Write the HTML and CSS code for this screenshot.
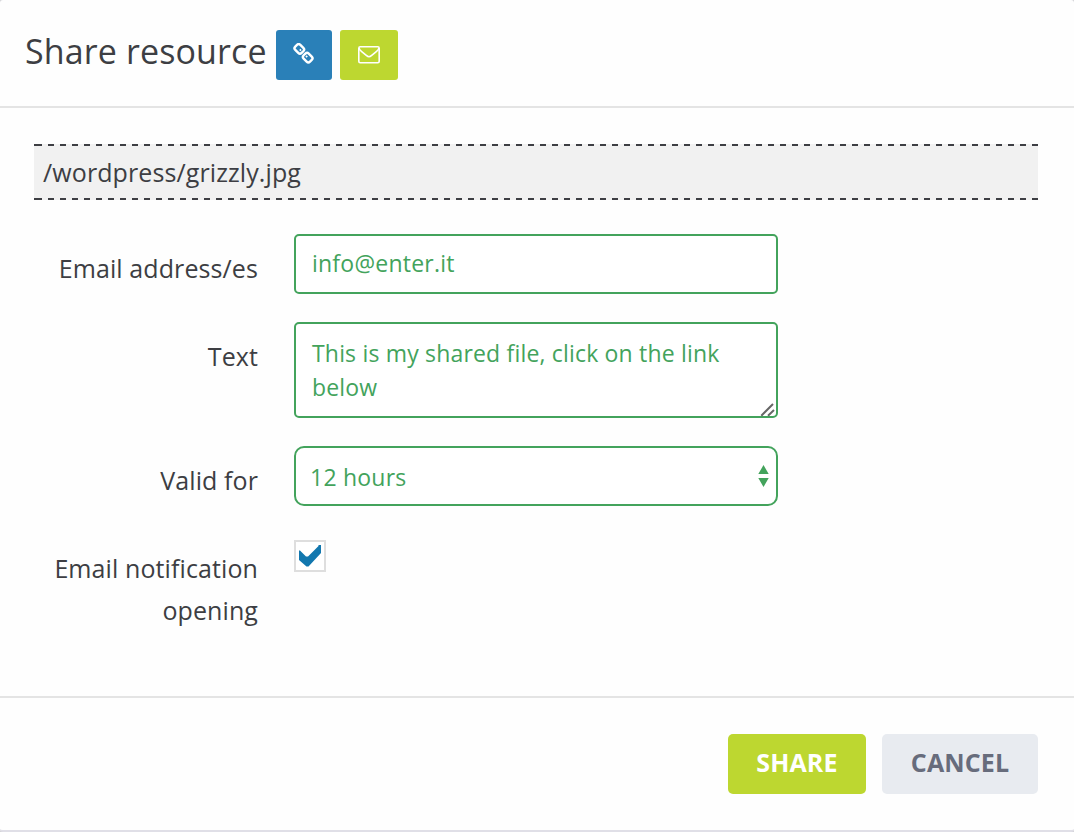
FILE: index.html
```html
<!DOCTYPE html>
<html lang="en">
<head>
<meta charset="utf-8">
<title>Share resource</title>
<link rel="stylesheet" href="styles.css">
</head>
<body>
<div class="modal">
  <header class="modal-header">
    <h1 class="title">Share resource</h1>
    <button class="tool tool-link" type="button" aria-label="Link">
      <svg width="21" height="21" viewBox="0 0 21 21" fill="none" stroke="#fff" stroke-width="2.400">
        <rect x="-4.500" y="-3.600" width="9" height="7.200" rx="2.400" transform="translate(6.300 5.900) rotate(45)"/>
        <rect x="-4.500" y="-3.600" width="9" height="7.200" rx="2.400" transform="translate(14.700 14.600) rotate(45)"/>
        <path d="M6.800 6.400l1.200 1.200M13 12.900l1.200 1.200" stroke-width="1.800"/>
      </svg>
    </button>
    <button class="tool tool-mail" type="button" aria-label="Email">
      <svg width="22" height="18" viewBox="0 0 22 18" fill="none" stroke="#fff" stroke-width="1.6">
        <rect x=".8" y=".8" width="20.4" height="15.9" rx="1.4"/>
        <path d="M1 2c.4 1.800 1.500 2.800 2.700 3.700l4.900 4c1.700 1.500 3.100 1.500 4.800 0l4.900-4C19.500 4.800 20.600 3.800 21 2"/>
      </svg>
    </button>
  </header>
  <main class="modal-body">
    <div class="path">/wordpress/grizzly.jpg</div>
    <form class="form">
      <label class="label" for="email">Email address/es</label>
      <input class="control email" id="email" type="text" value="info@enter.it">
      <label class="label" for="text">Text</label>
      <div class="area-wrap">
        <textarea class="control area" id="text" spellcheck="false">This is my shared file, click on the link below</textarea>
        <svg class="grip" width="15" height="15" viewBox="0 0 15 15" fill="none" stroke="#666" stroke-width="2"><path d="M1.300 13.700 13 2M8 13.700 14 8"/></svg>
      </div>
      <label class="label" for="valid">Valid for</label>
      <div class="select-wrap">
        <select class="control select" id="valid"><option>12 hours</option></select>
        <svg class="arrows" width="12" height="22" viewBox="0 0 12 22" fill="#43a35c"><path d="M.3 9 5.500 0l5.200 9zM.3 13h10.400l-5.200 9z"/></svg>
      </div>
      <label class="label">Email notification opening</label>
      <div class="check" role="checkbox" aria-checked="true">
        <svg width="28" height="28" viewBox="0 0 28 28" fill="#1277ae"><path d="M3 8.500h1L10 14.500h2L22.500 4V3H25V11L12.500 24.500h-2L3 18z"/></svg>
      </div>
    </form>
  </main>
  <footer class="modal-footer">
    <button class="btn btn-share" type="button">SHARE</button>
    <button class="btn btn-cancel" type="button">CANCEL</button>
  </footer>
</div>
</body>
</html>
```

FILE: styles.css
```css
* { box-sizing: border-box; }
html { background: #d4d4d8; }
body {
  margin: 0;
  color: #3d3e43;
  font: 25px/42px "Open Sans", sans-serif;
  letter-spacing: .1px;
}
.modal {
  display: flex;
  flex-direction: column;
  height: 832px;
  overflow: hidden;
  background: #fefefe;
  border-bottom: 2px solid #e0dfe7;
  border-radius: 3px;
}
.modal-header {
  display: flex;
  align-items: flex-start;
  height: 108px;
  padding: 30px 24px 0 25px;
  border-bottom: 2px solid #e4e4e4;
}
.title {
  width: 251px;
  margin: -4px 0 0;
  font-size: 34px;
  font-weight: 400;
  line-height: 50px;
  letter-spacing: .12px;
  white-space: nowrap;
}
.tool {
  display: flex;
  align-items: center;
  justify-content: center;
  height: 50px;
  padding: 0;
  border: 0;
  border-radius: 3px;
}
.tool-link { width: 56px; margin-right: 8px; padding: 0 1px 3px 0; background: #2a80b8; }
.tool-mail { width: 58px; background: #bdd730; }
.modal-body {
  height: 588px;
  padding: 36px 36px 0 34px;
}
.path {
  height: 56px;
  padding-left: 9px;
  line-height: 56px;
  background:
    repeating-linear-gradient(90deg, #3d3e43 0 6px, transparent 6px 12px) 2px 0 / 1002px 2px no-repeat,
    repeating-linear-gradient(90deg, #3d3e43 0 6px, transparent 6px 12px) 2px 100% / 1002px 2px no-repeat,
    linear-gradient(#3d3e43, #3d3e43) 0 0 / 2px 2px no-repeat,
    linear-gradient(#3d3e43, #3d3e43) 0 100% / 2px 2px no-repeat,
    #f1f1f1;
}
.form {
  display: grid;
  grid-template-columns: 224px 484px;
  grid-template-rows: 60px 96px 60px 97px;
  gap: 28px 36px;
  margin-top: 34px;
}
.label { padding-top: 13px; text-align: right; }
.control {
  display: block;
  width: 484px;
  height: 100%;
  margin: 0;
  color: #43a35c;
  background: #fff;
  border: 2px solid #43a35c;
  border-radius: 5px;
  outline: 0;
  font: 23px/34px "Open Sans", sans-serif;
  letter-spacing: .23px;
}
.email { padding: 0 16px 2px; }
.area-wrap, .select-wrap { position: relative; }
.area { padding: 12px 16px 0; overflow: hidden; resize: none; letter-spacing: .18px; }
.grip { position: absolute; right: 3px; bottom: 1px; }
.select { padding: 2px 14px 0; border-radius: 10px; appearance: none; }
.arrows { position: absolute; top: 19px; right: 8px; }
.check {
  width: 32px;
  height: 32px;
  margin-top: 6px;
  border: 2px solid #dedede;
  background: #fff;
}
.check svg { display: block; }
.modal-footer {
  display: flex;
  justify-content: flex-end;
  gap: 16px;
  padding: 36px 36px 0;
  border-top: 2px solid #e4e4e4;
}
.btn {
  height: 60px;
  padding: 0 0 4px;
  border: 0;
  border-radius: 5px;
  font: 700 25px/42px "Open Sans", sans-serif;
  letter-spacing: .12px;
}
.btn-share { width: 138px; color: #fff; background: #bdd730; }
.btn-cancel { width: 156px; color: #676c7c; background: #e8ebf0; }
```
